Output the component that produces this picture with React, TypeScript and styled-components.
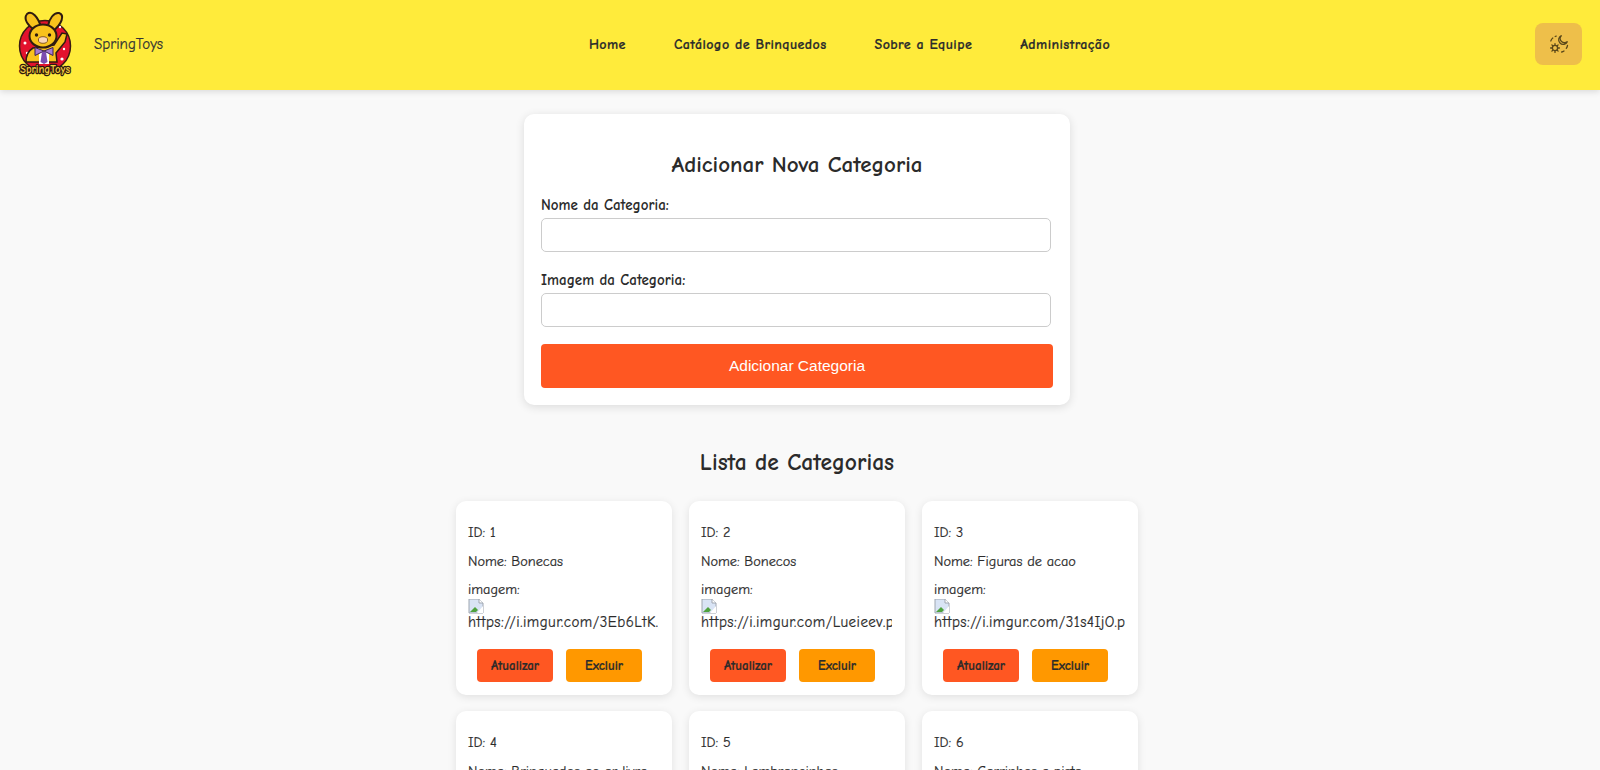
import React, { FC } from "react";
import styled, { createGlobalStyle } from "styled-components";

const comic = `"Comic Sans MS", "Comic Neue", "Noto Sans", sans-serif`;

const categories = [
  { id: 1, nome: "Bonecas", url: "https://i.imgur.com/3Eb6LtK.png" },
  { id: 2, nome: "Bonecos", url: "https://i.imgur.com/Lueieev.png" },
  { id: 3, nome: "Figuras de acao", url: "https://i.imgur.com/31s4IjO.png" },
  { id: 4, nome: "Brinquedos ao ar livre", url: "https://i.imgur.com/8Kd2Lw.png" },
  { id: 5, nome: "Lembrancinhas", url: "https://i.imgur.com/Q7fT1xA.png" },
  { id: 6, nome: "Carrinhos e pista", url: "https://i.imgur.com/Zp3Nw2c.png" },
];

const Logo: FC = () => (
  <LogoSvg viewBox="0 0 54 68" role="img" aria-label="SpringToys">
    <circle cx="27" cy="35" r="25.5" fill="#e3122d" stroke="#3a1a12" strokeWidth="1.5" />
    <g fill="#fff">
      <circle cx="7" cy="32" r="1.5" />
      <circle cx="9" cy="42" r="1.2" />
      <circle cx="44" cy="48" r="1.6" />
      <circle cx="42" cy="16" r="1.2" />
      <circle cx="46" cy="38" r="1.2" />
    </g>
    <path d="M17 19C10 15 5 8 9 3c5-4 11 3 14 13z" fill="#f8c21c" stroke="#2f1b10" strokeWidth="2" />
    <path d="M30 15c1-7 6-14 11-13 6 2 3 11-6 18z" fill="#f8c21c" stroke="#2f1b10" strokeWidth="2" />
    <path d="M15 37c-5 3-7 9-7 14h31l-1-9 9-11 2-8-5-1-8 12z" fill="#f8c21c" stroke="#2f1b10" strokeWidth="1.5" />
    <rect x="21" y="40" width="10" height="13" fill="#fff" />
    <ellipse cx="25" cy="25" rx="13.500" ry="11.500" fill="#f8c21c" stroke="#2f1b10" strokeWidth="2" />
    <circle cx="18.500" cy="24" r="1.700" fill="#2f1b10" />
    <circle cx="31.500" cy="24" r="1.700" fill="#2f1b10" />
    <ellipse cx="25" cy="29" rx="4.600" ry="3.300" fill="#fbd8b8" stroke="#6b3c1a" strokeWidth="0.8" />
    <path d="M26 40l-9-3.500v8zM26 40l9-3.500v8z" fill="#a57bd2" stroke="#3c1f55" strokeWidth="1" />
    <path d="M24 41h4l1.500 10-3.500 2-3.500-2z" fill="#7c4db0" />
    <LogoText x="27" y="62" textAnchor="middle" textLength="50" lengthAdjust="spacingAndGlyphs">
      SpringToys
    </LogoText>
  </LogoSvg>
);

const ThemeIcon: FC = () => (
  <svg width="20" height="20" viewBox="0 0 20 20" fill="none" stroke="#5b4819" strokeWidth="1.3" strokeLinecap="round">
    <circle cx="6" cy="14" r="2.600" />
    <path d="M6 9.600v1.200M6 17.200v1.200M1.600 14h1.200M9.200 14h1.200M2.900 10.900l.8.800M8.300 16.300l.8.800M2.900 17.100l.8-.8M8.300 11.700l.8-.8" />
    <path d="M12.500 1.500a4.600 4.600 0 1 0 6 6 4 4 0 0 1-6-6z" />
    <path d="M1.800 7c.4-1.300 1-2.300 2-3M6.200 2.500l1-.4M18.500 11.500c-.2 1-.6 2-1.200 2.800M15 17c-.8.500-1.500.8-2.300 1" />
  </svg>
);

const BrokenImage: FC = () => (
  <svg width="16" height="16" viewBox="0 0 16 16">
    <path d="M1 1h10l4 4v10H1z" fill="#d9e4f5" stroke="#9fa6b0" strokeWidth="1" />
    <path d="M11 1v4h4" fill="#fff" stroke="#9fa6b0" strokeWidth="1" />
    <path d="M2 14l5-5 3 3-2 2z" fill="#4fa23f" />
    <path d="M9 15l6-7v7z" fill="#fff" />
  </svg>
);

const App: FC = () => {
  return (
    <Page>
      <GlobalStyle />
      <Header>
        <Brand>
          <Logo />
          <BrandName>SpringToys</BrandName>
        </Brand>
        <Nav>
          <NavLink>Home</NavLink>
          <NavLink>Catálogo de Brinquedos</NavLink>
          <NavLink>Sobre a Equipe</NavLink>
          <NavLink>Administração</NavLink>
        </Nav>
        <ThemeButton aria-label="Alternar tema">
          <ThemeIcon />
        </ThemeButton>
      </Header>

      <Main>
        <FormCard>
          <FormTitle>Adicionar Nova Categoria</FormTitle>
          <Field>
            <Label>Nome da Categoria:</Label>
            <Input />
          </Field>
          <Field>
            <Label>Imagem da Categoria:</Label>
            <Input />
          </Field>
          <SubmitButton>Adicionar Categoria</SubmitButton>
        </FormCard>

        <ListTitle>Lista de Categorias</ListTitle>
        <CardGrid>
          {categories.map((c) => (
            <Card key={c.id}>
              <Line>ID: {c.id}</Line>
              <Line>Nome: {c.nome}</Line>
              <ImageLabel>imagem:</ImageLabel>
              <ImageBox>
                <BrokenImage />
                <div>{c.url}</div>
              </ImageBox>
              <Actions>
                <ActionButton $color="#ff5722">Atualizar</ActionButton>
                <ActionButton $color="#ff9800">Excluir</ActionButton>
              </Actions>
            </Card>
          ))}
        </CardGrid>
      </Main>
    </Page>
  );
};

const GlobalStyle = createGlobalStyle`
  html, body {
    margin: 0;
    height: 770px;
    overflow: hidden;
    background: #f9f9f9;
  }

  * {
    box-sizing: border-box;
  }
`;

const Page = styled.div`
  font-family: ${comic};
  color: #2b2b2b;
  height: 770px;
  overflow: hidden;
`;

const Header = styled.header`
  height: 90px;
  background: #ffeb3b;
  box-shadow: 0 2px 6px rgba(0, 0, 0, 0.12);
  display: flex;
  justify-content: space-between;
  align-items: center;
  padding: 0 18px;
`;

const Brand = styled.div`
  display: flex;
  align-items: center;
  gap: 22px;
  width: 146px;
`;

const LogoSvg = styled.svg`
  width: 54px;
  height: 68px;
  display: block;
  flex: none;
`;

const LogoText = styled.text`
  font-family: ${comic};
  font-size: 11.5px;
  font-weight: 700;
  fill: #f5cf3e;
  stroke: #2f1b10;
  stroke-width: 2.6px;
  paint-order: stroke;
`;

const BrandName = styled.span`
  font-size: 15px;
  color: #333;
  margin-top: -2px;
  -webkit-text-stroke: 0.2px #333;
`;

const Nav = styled.nav`
  display: flex;
  gap: 48px;
  margin-top: -2px;
`;

const NavLink = styled.a`
  font-size: 14px;
  font-weight: 700;
  letter-spacing: 0.42px;
  color: #2b2b2b;
  -webkit-text-stroke: 0.2px #2b2b2b;
`;

const ThemeButton = styled.button`
  width: 47px;
  height: 42px;
  margin: -2px 0 0;
  border: 0;
  border-radius: 8px;
  background: #eebf4a;
  display: flex;
  align-items: center;
  justify-content: center;
  padding: 0;
`;

const Main = styled.main`
  display: flex;
  flex-direction: column;
  align-items: center;
  padding: 24px 6px 0 0;
`;

const FormCard = styled.section`
  width: 546px;
  height: 291px;
  background: #fff;
  border-radius: 10px;
  box-shadow: 0 2px 10px rgba(0, 0, 0, 0.12);
  padding: 36px 17px 0;
`;

const FormTitle = styled.h2`
  margin: 0 0 16px;
  font-size: 23px;
  line-height: 30px;
  font-weight: 700;
  text-align: center;
  color: #2b2b2b;
`;

const Field = styled.div`
  margin-bottom: 19px;
`;

const Label = styled.label`
  display: block;
  font-size: 15px;
  line-height: 18px;
  font-weight: 700;
  margin-bottom: 4px;
  color: #2b2b2b;
`;

const Input = styled.input`
  display: block;
  width: 510px;
  height: 34px;
  border: 1px solid #ccc;
  border-radius: 5px;
  background: #fff;
`;

const SubmitButton = styled.button`
  display: block;
  width: 512px;
  height: 44px;
  margin-top: -2px;
  border: 0;
  border-radius: 4px;
  background: #ff5722;
  color: #fff;
  font-family: "Liberation Sans", Arial, sans-serif;
  font-size: 15.5px;
`;

const ListTitle = styled.h2`
  margin: 42px 0 22px;
  font-size: 23.5px;
  line-height: 32px;
  font-weight: 700;
  color: #2b2b2b;
`;

const CardGrid = styled.div`
  display: grid;
  grid-template-columns: repeat(3, 216px);
  column-gap: 17px;
  row-gap: 16px;
`;

const Card = styled.article`
  height: 194px;
  background: #fff;
  border-radius: 10px;
  box-shadow: 0 2px 8px rgba(0, 0, 0, 0.1);
  padding: 23px 12px 0;
  font-size: 14.3px;
  color: #2b2b2b;
  -webkit-text-stroke: 0.2px #2b2b2b;
`;

const Line = styled.div`
  line-height: 18px;
  margin-bottom: 10.5px;
`;

const ImageLabel = styled.div`
  line-height: 18px;
`;

const ImageBox = styled.div`
  width: 191px;
  overflow: hidden;
  white-space: nowrap;
  line-height: 18px;
  font-size: 15px;
  letter-spacing: 0.45px;

  svg {
    display: block;
    margin-top: -1px;
    margin-bottom: -1px;
  }
`;

const Actions = styled.div`
  display: flex;
  gap: 13px;
  padding-left: 9px;
  margin-top: 18px;
`;

const ActionButton = styled.button<{ $color: string }>`
  width: 76px;
  height: 33px;
  border: 0;
  border-radius: 4px;
  background: ${(p) => p.$color};
  color: #2b2b2b;
  font-family: ${comic};
  font-size: 13px;
  font-weight: 700;
  padding: 0;
`;

export default App;
